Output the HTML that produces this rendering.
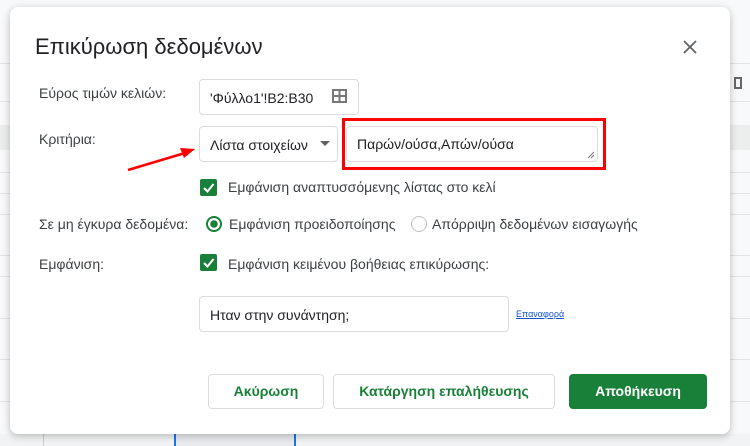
<!DOCTYPE html>
<html><head><meta charset="utf-8"><style>
*{margin:0;padding:0;box-sizing:border-box}
body{width:750px;height:446px;overflow:hidden;background:#fff;font-family:"Liberation Sans",sans-serif;position:relative;color:#3c4043}
.a{position:absolute}
.hl{position:absolute;left:0;width:750px;height:1px;background:#e2e3e3}
.dlg{position:absolute;left:10px;top:7px;width:720px;height:427px;background:#fff;border-radius:8px;box-shadow:0 2px 8px rgba(0,0,0,.25)}
.lbl{font-size:14px;color:#3c4043;position:absolute}
.box{position:absolute;border:1px solid #dadce0;border-radius:4px;background:#fff;font-size:14px;color:#202124}
.cb{position:absolute;width:17px;height:17px;background:#188038;border-radius:2px}
.btn{position:absolute;top:374px;height:35px;border:1px solid #dadce0;border-radius:4px;font-size:14px;font-weight:bold;color:#188038;text-align:center;line-height:33px;background:#fff}
</style></head><body>
<div class="a" style="left:0;top:0;width:750px;height:446px;background:#f8f9fa"></div>
<div class="hl" style="top:63px"></div><div class="hl" style="top:101px"></div><div class="hl" style="top:125px;height:25px;background:#eceded"></div><div class="hl" style="top:172px"></div><div class="hl" style="top:193px"></div><div class="hl" style="top:214px"></div><div class="hl" style="top:255px"></div><div class="hl" style="top:276px"></div><div class="hl" style="top:318px"></div><div class="hl" style="top:359px"></div><div class="hl" style="top:401px"></div>
<div class="a" style="left:0;top:434px;width:750px;height:12px;background:#f1f3f4"></div>
<div class="a" style="left:43px;top:434px;width:1px;height:12px;background:#ccc"></div>
<div class="a" style="left:174px;top:430px;width:2px;height:16px;background:#1a73e8"></div>
<div class="a" style="left:294px;top:430px;width:2px;height:16px;background:#1a73e8"></div>
<div class="a" style="left:176px;top:434px;width:118px;height:12px;background:#e8eaed"></div>
<div class="a" style="left:734px;top:77px;width:8px;height:12px;border:2px solid #666"></div>
<div class="dlg"></div>
<div class="a" style="left:35px;top:34px;font-size:22px;color:#202124">Επικύρωση δεδομένων</div>
<svg class="a" style="left:683px;top:40px" width="14" height="14"><path d="M1 1L13 13M13 1L1 13" stroke="#5f6368" stroke-width="1.8"/></svg>
<div class="lbl" style="left:39px;top:85px">Εύρος τιμών κελιών:</div>
<div class="box" style="left:199px;top:79px;width:160px;height:36px;padding:10px 0 0 10px">'Φύλλο1'!B2:B30</div>
<svg class="a" style="left:332px;top:89px" width="15" height="14"><rect x="1" y="1" width="13" height="12" fill="none" stroke="#777" stroke-width="2"/><path d="M7.5 1V13M1 7H14" stroke="#777" stroke-width="2"/></svg>
<div class="lbl" style="left:39px;top:131px">Κριτήρια:</div>
<div class="box" style="left:199px;top:126px;width:139px;height:36px;padding:10px 0 0 10px">Λίστα στοιχείων</div>
<svg class="a" style="left:320px;top:141px" width="10" height="6"><path d="M0 0H10L5 5z" fill="#5f6368"/></svg>
<div class="a" style="left:342px;top:118px;width:264px;height:52px;border:3px solid #f00"></div>
<div class="box" style="left:346px;top:126px;width:252px;height:36px;padding:9px 0 0 10px">Παρών/ούσα,Απών/ούσα</div>
<svg class="a" style="left:587px;top:151px" width="8" height="8"><path d="M7 1L1 7M7 4L4 7" stroke="#777"/></svg>
<svg class="a" style="left:125px;top:142px" width="75" height="32"><path d="M3 28L60 11" stroke="#f00" stroke-width="2.5"/><path d="M70 7L55 6L59 16z" fill="#f00"/></svg>
<div class="cb" style="left:200px;top:179px"></div>
<svg class="a" style="left:200px;top:179px" width="17" height="17"><path d="M4 9L7.5 12.5L13.5 5" stroke="#fff" stroke-width="2" fill="none"/></svg>
<div class="lbl" style="left:228px;top:179px">Εμφάνιση αναπτυσσόμενης λίστας στο κελί</div>
<div class="lbl" style="left:39px;top:216px">Σε μη έγκυρα δεδομένα:</div>
<svg class="a" style="left:205px;top:215px" width="18" height="18"><circle cx="9" cy="9" r="7" fill="none" stroke="#188038" stroke-width="2"/><circle cx="9" cy="9" r="3.8" fill="#188038"/></svg>
<div class="lbl" style="left:229px;top:216px">Εμφάνιση προειδοποίησης</div>
<svg class="a" style="left:410px;top:215px" width="18" height="18"><circle cx="9" cy="9" r="7.5" fill="none" stroke="#bdc1c6" stroke-width="1"/></svg>
<div class="lbl" style="left:432px;top:216px">Απόρριψη δεδομένων εισαγωγής</div>
<div class="lbl" style="left:39px;top:256px">Εμφάνιση:</div>
<div class="cb" style="left:200px;top:254px"></div>
<svg class="a" style="left:200px;top:254px" width="17" height="17"><path d="M4 9L7.5 12.5L13.5 5" stroke="#fff" stroke-width="2" fill="none"/></svg>
<div class="lbl" style="left:228px;top:256px">Εμφάνιση κειμένου βοήθειας επικύρωσης:</div>
<div class="box" style="left:199px;top:296px;width:310px;height:36px;padding:10px 0 0 10px">Ηταν στην συνάντηση;</div>
<div class="a" style="left:516px;top:309px;font-size:9px;color:#1155cc;text-decoration:underline">Επαναφορά</div>
<div class="btn" style="left:208px;width:116px">Ακύρωση</div>
<div class="btn" style="left:333px;width:222px">Κατάργηση επαλήθευσης</div>
<div class="btn" style="left:569px;width:138px;background:#188038;border-color:#188038;color:#fff">Αποθήκευση</div>
</body></html>
